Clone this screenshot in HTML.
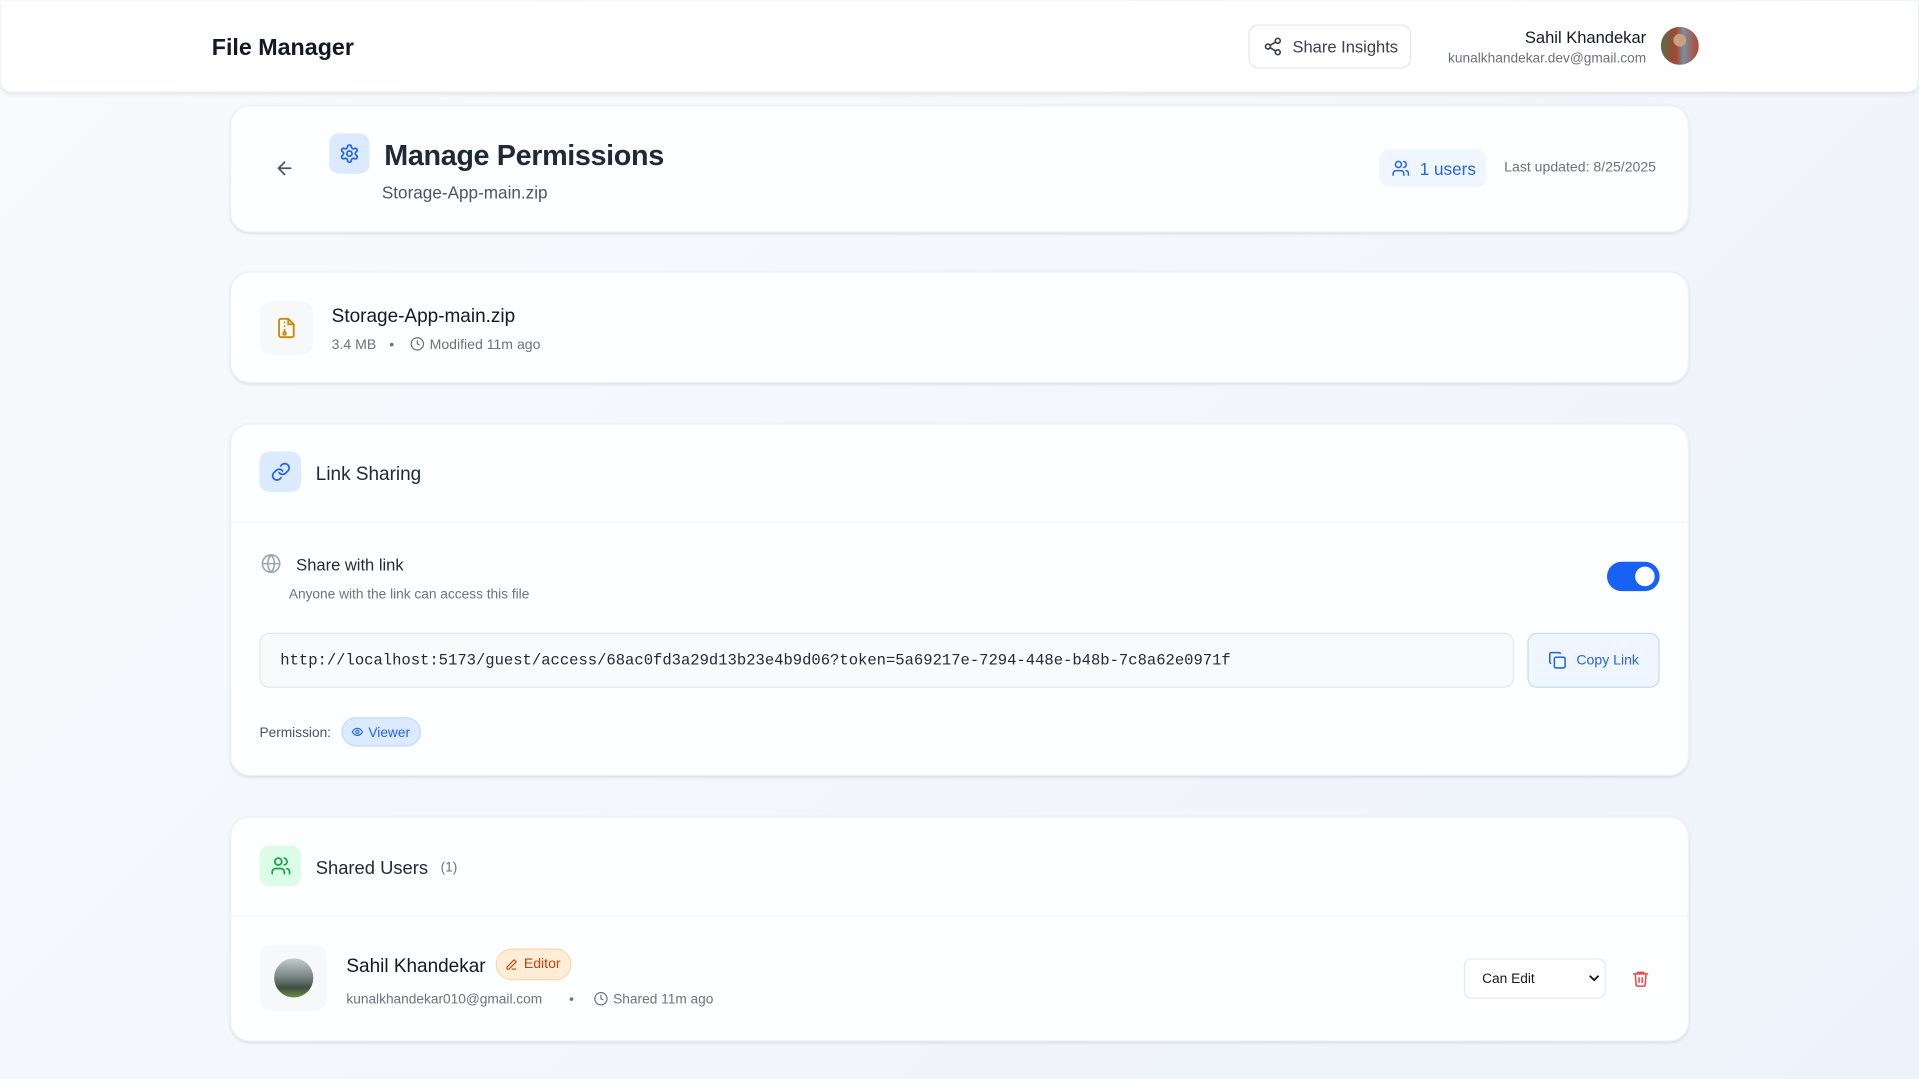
<!DOCTYPE html>
<html><head><meta charset="utf-8"><style>
*{box-sizing:border-box;margin:0;padding:0}
html,body{width:1919px;height:1079px;overflow:hidden}
body{background:linear-gradient(135deg,#f8fafc,#eef3fb);font-family:"Liberation Sans",sans-serif;color:#111827}
#w{position:absolute;left:0;top:0;width:1568px;height:882px;transform:scale(1.2239);transform-origin:0 0}
.a{position:absolute;white-space:nowrap}
.card{position:absolute;left:188px;width:1192px;background:#fdfeff;border-radius:16px;box-shadow:0 1px 3px rgba(0,0,0,.08),0 1px 2px rgba(0,0,0,.04);border:1px solid #eef1f5}
.ib{position:absolute;border-radius:8px;display:flex;align-items:center;justify-content:center}
svg{display:block}
.g{color:#6b7280}
</style></head><body><div id="w">
<div class="a" style="left:1px;top:1px;width:1566px;height:74px;background:#fff;border-radius:0 0 8px 8px;box-shadow:0 2px 4px rgba(0,0,0,.08)"></div>
<div class="a" style="left:173px;top:29px;font-size:19px;font-weight:bold;color:#111827">File Manager</div>
<div class="a" style="left:1020px;top:20px;width:133px;height:36px;border:1px solid #e5e7eb;border-radius:8px;background:#fff"></div>
<svg class="a" style="left:1032px;top:30px" width="16" height="16" viewBox="0 0 24 24" fill="none" stroke="#374151" stroke-width="2" stroke-linecap="round"><circle cx="18" cy="5" r="3"/><circle cx="6" cy="12" r="3"/><circle cx="18" cy="19" r="3"/><path d="M8.6 13.5l6.8 4M15.4 6.5l-6.8 4"/></svg>
<div class="a" style="left:1056px;top:31px;font-size:13.5px;color:#374151">Share Insights</div>
<div class="a" style="left:1100px;top:23px;width:245px;text-align:right;font-size:13.5px;color:#111827">Sahil Khandekar</div>
<div class="a" style="left:1100px;top:42px;width:245px;text-align:right;font-size:11.2px;color:#6b7280">kunalkhandekar.dev@gmail.com</div>
<div class="a" style="left:1357px;top:22px;width:31px;height:31px;border-radius:50%;background:radial-gradient(circle at 50% 35%,#c9a27d 0 20%,transparent 21%),linear-gradient(90deg,#5b6b4a,#a4472f 40%,#7b8da0 60%,#b5432d);"></div>

<div class="card" style="top:86px;height:104px"></div>
<svg class="a" style="left:224px;top:129px" width="17" height="17" viewBox="0 0 24 24" fill="none" stroke="#4b5563" stroke-width="2" stroke-linecap="round" stroke-linejoin="round"><path d="M19 12H5M12 19l-7-7 7-7"/></svg>
<div class="ib" style="left:269px;top:109px;width:33px;height:33px;background:#dbeafe"><svg width="17" height="17" viewBox="0 0 24 24" fill="none" stroke="#2563eb" stroke-width="2"><circle cx="12" cy="12" r="3"/><path d="M12.2 2h-.4a2 2 0 0 0-2 2v.2a2 2 0 0 1-1 1.7l-.4.3a2 2 0 0 1-2 0l-.2-.1a2 2 0 0 0-2.7.7l-.2.4a2 2 0 0 0 .7 2.7l.2.1a2 2 0 0 1 1 1.7v.5a2 2 0 0 1-1 1.7l-.2.1a2 2 0 0 0-.7 2.7l.2.4a2 2 0 0 0 2.7.7l.2-.1a2 2 0 0 1 2 0l.4.3a2 2 0 0 1 1 1.7v.2a2 2 0 0 0 2 2h.4a2 2 0 0 0 2-2v-.2a2 2 0 0 1 1-1.7l.4-.3a2 2 0 0 1 2 0l.2.1a2 2 0 0 0 2.7-.7l.2-.4a2 2 0 0 0-.7-2.7l-.2-.1a2 2 0 0 1-1-1.7v-.5a2 2 0 0 1 1-1.7l.2-.1a2 2 0 0 0 .7-2.7l-.2-.4a2 2 0 0 0-2.7-.7l-.2.1a2 2 0 0 1-2 0l-.4-.3a2 2 0 0 1-1-1.7V4a2 2 0 0 0-2-2z"/></svg></div>
<div class="a" style="left:314px;top:114px;font-size:23.5px;font-weight:bold;color:#1f2937;letter-spacing:-0.3px">Manage Permissions</div>
<div class="a" style="left:312px;top:149px;font-size:14px;color:#4b5563">Storage-App-main.zip</div>
<div class="a" style="left:1127px;top:122px;width:87px;height:31px;background:#eff6ff;border-radius:8px"></div>
<svg class="a" style="left:1137px;top:130px" width="15" height="15" viewBox="0 0 24 24" fill="none" stroke="#2563eb" stroke-width="2" stroke-linecap="round"><circle cx="9" cy="7" r="4"/><path d="M2 21v-2a4 4 0 0 1 4-4h6a4 4 0 0 1 4 4v2M16 3.1a4 4 0 0 1 0 7.8M22 21v-2a4 4 0 0 0-3-3.9"/></svg>
<div class="a" style="left:1160px;top:130px;font-size:14px;color:#2563eb">1 users</div>
<div class="a" style="left:1229px;top:131px;font-size:11.5px;color:#6b7280">Last updated: 8/25/2025</div>

<div class="card" style="top:222px;height:91px"></div>
<div class="ib" style="left:212px;top:246px;width:44px;height:44px;background:#f6f8fa;border-radius:10px"><svg width="18" height="18" viewBox="0 0 24 24" fill="none" stroke="#ca8a04" stroke-width="2" stroke-linecap="round"><path d="M14 2H6a2 2 0 0 0-2 2v16a2 2 0 0 0 2 2h12a2 2 0 0 0 2-2V8z"/><path d="M14 2v6h6M10 6h0M10 10h0M10 14v2"/><circle cx="10" cy="18" r="1.5"/></svg></div>
<div class="a" style="left:271px;top:250px;font-size:15.5px;color:#111827">Storage-App-main.zip</div>
<div class="a g" style="left:271px;top:276px;font-size:11.5px">3.4 MB</div>
<div class="a g" style="left:318px;top:276px;font-size:11.5px">•</div>
<svg class="a" style="left:335px;top:275px" width="12" height="12" viewBox="0 0 24 24" fill="none" stroke="#6b7280" stroke-width="2"><circle cx="12" cy="12" r="10"/><path d="M12 6v6l4 2"/></svg>
<div class="a g" style="left:351px;top:276px;font-size:11.5px">Modified 11m ago</div>

<div class="card" style="top:346px;height:288px"></div>
<div class="a" style="left:189px;top:426px;width:1190px;height:1px;background:#f1f3f6"></div>
<div class="ib" style="left:212px;top:369px;width:34px;height:33px;background:#dbeafe"><svg width="17" height="17" viewBox="0 0 24 24" fill="none" stroke="#2563eb" stroke-width="2" stroke-linecap="round"><path d="M10 13a5 5 0 0 0 7.5.5l3-3a5 5 0 0 0-7-7l-1.7 1.7"/><path d="M14 11a5 5 0 0 0-7.5-.5l-3 3a5 5 0 0 0 7 7l1.7-1.7"/></svg></div>
<div class="a" style="left:258px;top:379px;font-size:15.5px;color:#1f2937">Link Sharing</div>
<svg class="a" style="left:213px;top:452px" width="17" height="17" viewBox="0 0 24 24" fill="none" stroke="#9ca3af" stroke-width="1.8"><circle cx="12" cy="12" r="10"/><path d="M2 12h20M12 2a15 15 0 0 1 0 20M12 2a15 15 0 0 0 0 20"/></svg>
<div class="a" style="left:242px;top:454px;font-size:13.5px;color:#1f2937">Share with link</div>
<div class="a g" style="left:236px;top:480px;font-size:11.2px">Anyone with the link can access this file</div>
<div class="a" style="left:1313px;top:459px;width:43px;height:24px;border-radius:12px;background:#1762f5"></div>
<div class="a" style="left:1336px;top:463px;width:16px;height:16px;border-radius:50%;background:#fff"></div>
<div class="a" style="left:212px;top:517px;width:1025px;height:45px;background:#f9fafb;border:1px solid #e5e7eb;border-radius:8px"></div>
<div class="a" style="left:229px;top:532px;font-family:'Liberation Mono',monospace;font-size:12.7px;color:#1f2937">http://localhost:5173/guest/access/68ac0fd3a29d13b23e4b9d06?token=5a69217e-7294-448e-b48b-7c8a62e0971f</div>
<div class="a" style="left:1248px;top:517px;width:108px;height:45px;background:#eff6ff;border:1px solid #bfdbfe;border-radius:8px"></div>
<svg class="a" style="left:1265px;top:532px" width="15" height="15" viewBox="0 0 24 24" fill="none" stroke="#2563eb" stroke-width="2"><rect x="8" y="8" width="14" height="14" rx="2"/><path d="M4 16a2 2 0 0 1-2-2V4a2 2 0 0 1 2-2h10a2 2 0 0 1 2 2"/></svg>
<div class="a" style="left:1288px;top:534px;font-size:11.5px;color:#2563eb">Copy Link</div>
<div class="a" style="left:212px;top:593px;font-size:11.2px;color:#4b5563">Permission:</div>
<div class="a" style="left:279px;top:586px;width:65px;height:24px;background:#dbeafe;border:1px solid #bfdbfe;border-radius:12px"></div>
<svg class="a" style="left:287px;top:593px" width="10" height="10" viewBox="0 0 24 24" fill="none" stroke="#2563eb" stroke-width="2.2"><path d="M2 12s3.5-7 10-7 10 7 10 7-3.5 7-10 7S2 12 2 12z"/><circle cx="12" cy="12" r="3"/></svg>
<div class="a" style="left:301px;top:593px;font-size:11.2px;color:#2563eb">Viewer</div>

<div class="card" style="top:667px;height:184px"></div>
<div class="a" style="left:189px;top:748px;width:1190px;height:1px;background:#f1f3f6"></div>
<div class="ib" style="left:212px;top:691px;width:34px;height:33px;background:#dcfce7"><svg width="17" height="17" viewBox="0 0 24 24" fill="none" stroke="#16a34a" stroke-width="2" stroke-linecap="round"><circle cx="9" cy="7" r="4"/><path d="M2 21v-2a4 4 0 0 1 4-4h6a4 4 0 0 1 4 4v2M16 3.1a4 4 0 0 1 0 7.8M22 21v-2a4 4 0 0 0-3-3.9"/></svg></div>
<div class="a" style="left:258px;top:701px;font-size:15px;color:#1f2937">Shared Users</div>
<div class="a g" style="left:360px;top:703px;font-size:11.2px">(1)</div>
<div class="a" style="left:212px;top:772px;width:55px;height:54px;background:#f6f8fa;border-radius:10px"></div>
<div class="a" style="left:224px;top:783px;width:32px;height:32px;border-radius:50%;background:linear-gradient(180deg,#c5cbcc 0%,#7d8a87 45%,#3f4f45 75%,#6c8c3c 100%)"></div>
<div class="a" style="left:283px;top:781px;font-size:15.5px;color:#111827">Sahil Khandekar</div>
<div class="a" style="left:405px;top:775px;width:62px;height:26px;background:#ffedd5;border:1px solid #fed7aa;border-radius:13px"></div>
<svg class="a" style="left:413px;top:783px" width="10" height="10" viewBox="0 0 24 24" fill="none" stroke="#c2410c" stroke-width="2.2"><path d="M17 3l4 4L7 21H3v-4z"/><path d="M12 21h9"/></svg>
<div class="a" style="left:428px;top:782px;font-size:11.5px;color:#c2410c">Editor</div>
<div class="a g" style="left:283px;top:811px;font-size:11.2px">kunalkhandekar010@gmail.com</div>
<div class="a g" style="left:465px;top:811px;font-size:11.2px">•</div>
<svg class="a" style="left:485px;top:810px" width="12" height="12" viewBox="0 0 24 24" fill="none" stroke="#6b7280" stroke-width="2"><circle cx="12" cy="12" r="10"/><path d="M12 6v6l4 2"/></svg>
<div class="a g" style="left:501px;top:811px;font-size:11.2px">Shared 11m ago</div>
<div class="a" style="left:1196px;top:783px;width:116px;height:33px;border:1px solid #e5e7eb;border-radius:6px;background:#fff"></div>
<div class="a" style="left:1211px;top:794px;font-size:11.2px;color:#111827">Can Edit</div>
<svg class="a" style="left:1298px;top:796px" width="9" height="7" viewBox="0 0 10 7" fill="none" stroke="#111" stroke-width="1.6"><path d="M1 1l4 4 4-4"/></svg>
<svg class="a" style="left:1333px;top:792px" width="15" height="15" viewBox="0 0 24 24" fill="none" stroke="#ef4444" stroke-width="2" stroke-linecap="round"><path d="M3 6h18M8 6V4h8v2M19 6l-1 14a2 2 0 0 1-2 2H8a2 2 0 0 1-2-2L5 6M10 11v6M14 11v6"/></svg>
</div></body></html>
